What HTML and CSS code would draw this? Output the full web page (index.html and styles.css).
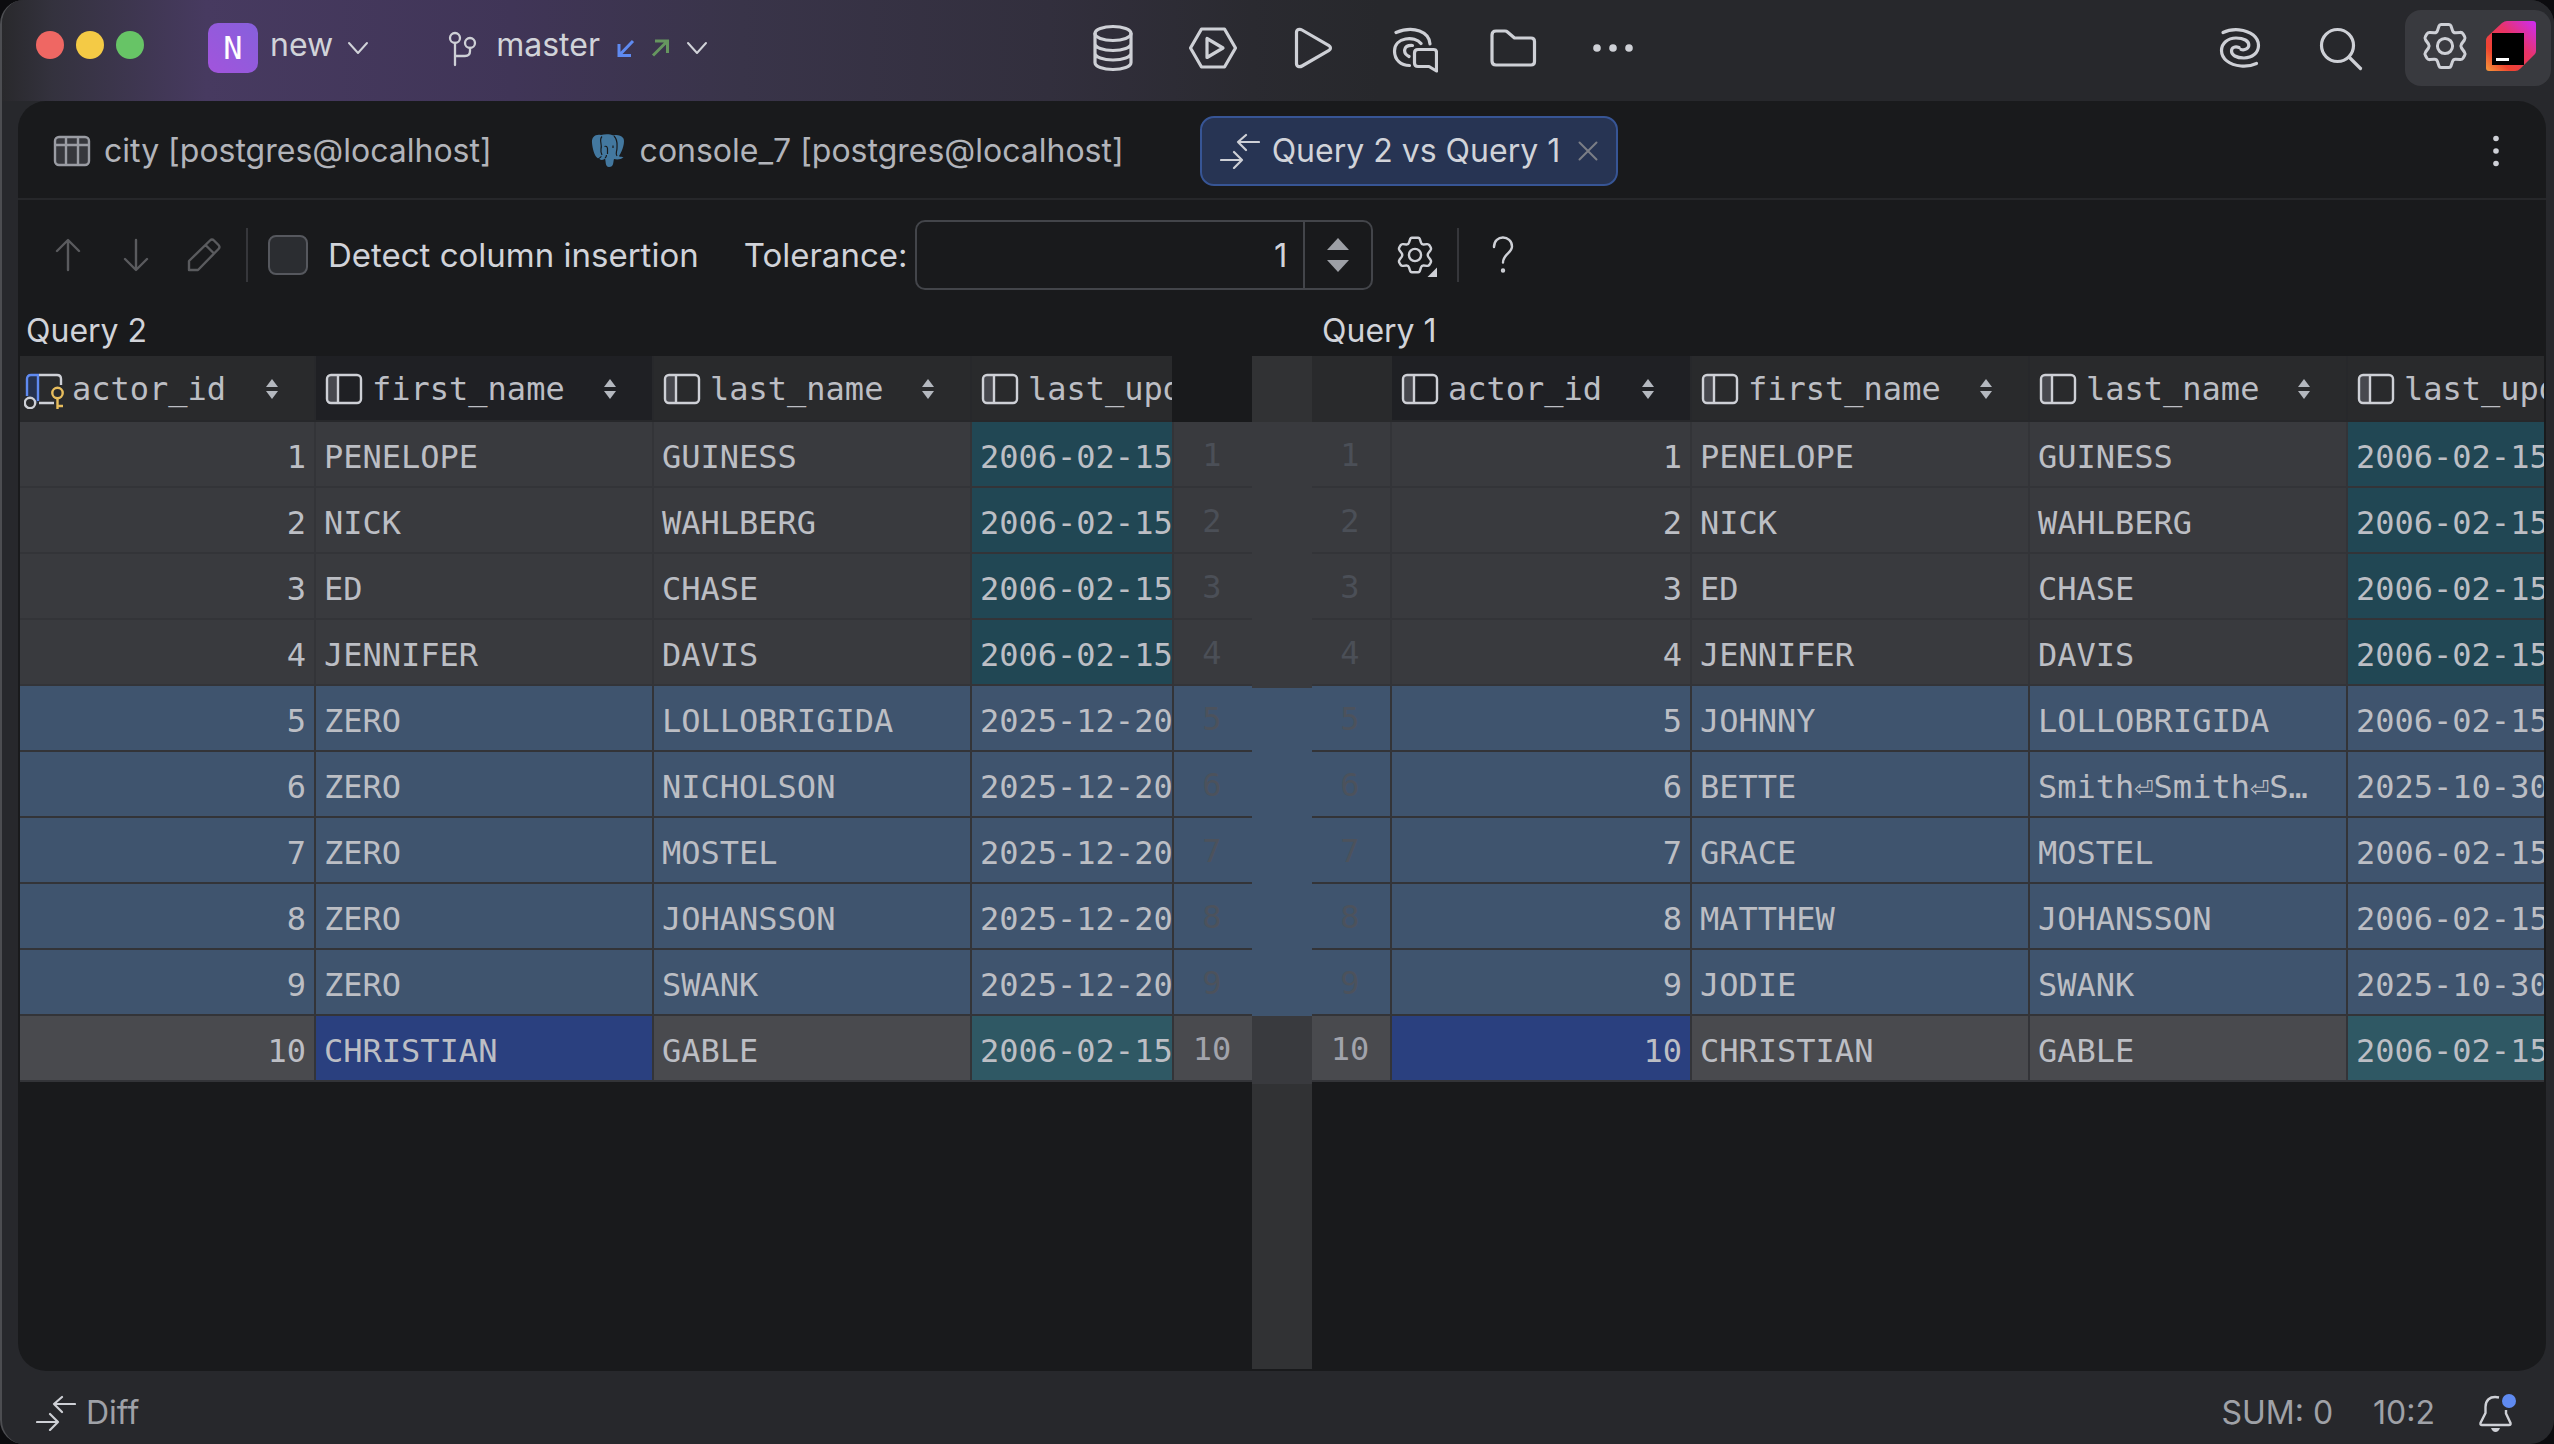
FILE: index.html
```html
<!DOCTYPE html>
<html lang="en">
<head>
  <meta charset="UTF-8" />
  <meta name="viewport" content="width=device-width, initial-scale=1.0" />
  <title>Query 2 vs Query 1</title>
  <link rel="stylesheet" href="styles.css">
</head>
<body>
  <!-- shared icons -->
  <svg class="sprite" aria-hidden="true">
    <symbol id="chevron" viewBox="0 0 22 22"><path d="M2 6L11 16L20 6" fill="none" stroke="currentColor" stroke-width="2" stroke-linecap="round" stroke-linejoin="round"/></symbol>
    <symbol id="column" viewBox="0 0 40 40">
      <path d="M4 6H14V34H4Z" fill="#47484e"/>
      <rect x="3" y="6" width="34" height="28" rx="4" fill="none" stroke="#ced0d6" stroke-width="2.4"/>
      <path d="M14 6V34" stroke="#ced0d6" stroke-width="2.4"/>
    </symbol>
    <symbol id="sort" viewBox="0 0 12 20"><path d="M6 0L12 8H0ZM6 20L0 12H12Z" fill="#b4b8bf"/></symbol>
    <symbol id="diff" viewBox="0 0 40 36"><path d="M39 9H18M26 2L18 9L26 17M1 27H22M14 19L22 27L14 35" fill="none" stroke="#ced0d6" stroke-width="2.2" stroke-linecap="round" stroke-linejoin="round"/></symbol>
    <symbol id="gear" viewBox="-25 -25 50 50">
      <path d="M-4 -21.5H4Q5.5 -21.5 6 -20L7.5 -15.5Q8.3 -13 10.8 -13.2L15 -13.6Q17 -13.8 18 -12.2L19.6 -9.5Q20.6 -7.8 19.4 -6L16.5 -2Q15.3 0 16.5 2L19.4 6Q20.6 7.8 19.6 9.5L18 12.2Q17 13.8 15 13.6L10.8 13.2Q8.3 13 7.5 15.5L6 20Q5.5 21.5 4 21.5H-4Q-5.5 21.5 -6 20L-7.5 15.5Q-8.3 13 -10.8 13.2L-15 13.6Q-17 13.8 -18 12.2L-19.6 9.5Q-20.6 7.8 -19.4 6L-16.5 2Q-15.3 0 -16.5 -2L-19.4 -6Q-20.6 -7.8 -19.6 -9.5L-18 -12.2Q-17 -13.8 -15 -13.6L-10.8 -13.2Q-8.3 -13 -7.5 -15.5L-6 -20Q-5.5 -21.5 -4 -21.5Z" fill="none" stroke="#ced0d6" stroke-width="3"/>
      <circle r="7.6" fill="none" stroke="#ced0d6" stroke-width="3"/>
    </symbol>
  </svg>

  <div class="window">
    <header class="titlebar">
      <div class="title-left">
        <div class="lights">
          <span class="light red"></span>
          <span class="light yellow"></span>
          <span class="light green"></span>
        </div>
        <button type="button" class="project">
          <span class="project-badge">N</span>
          <span class="title-text">new</span>
          <svg class="chevron"><use href="#chevron"/></svg>
        </button>
        <button type="button" class="branch">
          <svg class="icon-40" viewBox="0 0 40 40" fill="none" stroke="#ced0d6" stroke-width="2.3" stroke-linecap="round">
            <circle cx="13" cy="10" r="5"/><circle cx="28" cy="15" r="5"/>
            <path d="M13 15V37M28 20V23Q28 28 23 28H13"/>
          </svg>
          <span class="title-text">master</span>
          <svg class="arrow" viewBox="0 0 20 20"><path d="M17 3L3.500 17M3 6V17.500H15" fill="none" stroke="#5f8af0" stroke-width="3"/></svg>
          <svg class="arrow" viewBox="0 0 20 20"><path d="M3 17.500L17 3.500M5 3H17.500V15" fill="none" stroke="#66965f" stroke-width="3"/></svg>
          <svg class="chevron"><use href="#chevron"/></svg>
        </button>
      </div>

      <div class="title-actions">
        <button type="button" class="icon-btn" aria-label="Database">
          <svg viewBox="0 0 50 50"><ellipse cx="25" cy="10.500" rx="18" ry="7"/><path d="M7 10.500V39.500C7 43.500 15 46.500 25 46.500S43 43.500 43 39.500V10.500M7 20.500C7 24.500 15 27.500 25 27.500S43 24.500 43 20.500M7 30C7 34 15 37 25 37S43 34 43 30"/></svg>
        </button>
        <button type="button" class="icon-btn" aria-label="Services">
          <svg viewBox="0 0 50 50"><path d="M13.500 6H36.500L47.500 25L36.500 44H13.500L2.500 25ZM19 15.500V34.500L35 25Z"/></svg>
        </button>
        <button type="button" class="icon-btn" aria-label="Run">
          <svg viewBox="0 0 50 50"><path d="M8.500 9.500C8.500 6.500 11.500 5.500 14 7L41 22.600C43 23.800 43 26.200 41 27.400L14 43C11.500 44.500 8.500 43.500 8.500 40.500Z"/></svg>
        </button>
        <button type="button" class="icon-btn" aria-label="AI Chat">
          <svg viewBox="0 0 50 50"><path d="M8 9.500C26 2 41.500 9 42 21M33 20.500C27 12.500 6.500 14 6.500 28C6.500 37 13 42.500 21.500 42.500M24.500 22.500C15 22 14.500 30 21 33.500M30 26.500H45.500Q48.500 26.500 48.500 29.500V48L41 43.500H30Q26.500 43.500 26.500 40V30Q26.500 26.500 30 26.500Z"/></svg>
        </button>
        <button type="button" class="icon-btn" aria-label="Files">
          <svg viewBox="0 0 50 50"><path d="M4 12Q4 8 8 8H17Q18.500 8 19.500 9L26.500 15H43Q46.500 15 46.500 18.500V38.500Q46.500 42 43 42H8Q4 42 4 38Z"/></svg>
        </button>
        <button type="button" class="icon-btn" aria-label="More">
          <svg class="filled" viewBox="0 0 50 50"><circle cx="9" cy="25" r="3.800"/><circle cx="25" cy="25" r="3.800"/><circle cx="41" cy="25" r="3.800"/></svg>
        </button>
      </div>

      <div class="title-right">
        <button type="button" class="icon-btn" aria-label="AI Assistant">
          <svg viewBox="0 0 50 50"><path d="M8 9.500C14 6.500 20 6.500 24 6.800C36 8 43.500 14.500 43.500 22.500C43.500 30 37 35 29 35C21 35 16.500 32 16.500 28C16.500 24.500 20 23 24 24.500M41.500 40.500C37 42.500 31 43.500 26 43C14 42 6.500 35.500 6.500 27.500C6.500 20 13 15 21 15C29 15 33.800 18 33.800 22C33.800 25.500 30 27.500 26 26.500"/></svg>
        </button>
        <button type="button" class="icon-btn" aria-label="Search">
          <svg viewBox="0 0 50 50"><circle cx="22.500" cy="22.500" r="16"/><path d="M34 34L45.500 45.500"/></svg>
        </button>
        <div class="title-group">
          <button type="button" class="icon-btn" aria-label="Settings"><svg><use href="#gear"/></svg></button>
          <svg class="logo" viewBox="0 0 50 50">
            <defs>
              <linearGradient id="logoFill" x1="0" y1="1" x2="1" y2="0">
                <stop offset="0" stop-color="#f59a3c"/><stop offset="0.250" stop-color="#f0442f"/>
                <stop offset="0.600" stop-color="#e8336a"/><stop offset="1" stop-color="#cc2cf5"/>
              </linearGradient>
            </defs>
            <path d="M0 19Q0 17 1.500 15.500L16 2Q18.500 0 21 0H47Q50 0 50 3V30Q50 32 48.500 33.500L34.500 47.500Q32 50 29 50H3Q0 50 0 47Z" fill="url(#logoFill)"/>
            <path d="M6 12H38V44H6Z" fill="#000"/><path d="M10 37H23V40H10Z" fill="#fff"/>
          </svg>
        </div>
      </div>
    </header>

    <main class="editor">
      <nav class="tabs">
        <div class="tab">
          <svg class="icon-40" viewBox="0 0 40 40"><rect x="3" y="6" width="34" height="28" rx="4" fill="#36373c" stroke="#9a9ca3" stroke-width="2.400"/><path d="M3 14H37M14 6V34M26 6V34" stroke="#9a9ca3" stroke-width="2.400"/></svg>
          <span>city [postgres@localhost]</span>
          <span class="close"></span>
        </div>
        <div class="tab">
          <svg class="icon-40" viewBox="0 0 40 40">
            <path d="M13 4C7 3 3.500 6 4 12C4.500 18 6.500 25 9.500 27C11 28 12.500 25 13.500 25C14 27 11 27 11.500 28C13 29.500 16 29 17 27.500C18 30 17 36 21 36C26 36 25 31 26 28C29 29 33 28.500 35.500 26.500C34 25.500 31 26 31 25C35 19 37 11 35.500 7.500C33 4 28 3.500 25.500 4.500C22 3 17 3 13 4Z" fill="#43789f"/>
            <path d="M14 5.500C10.500 9 14.500 13 13 18C12.500 21 13.500 23 14 24M26 5C30 9 29 13 29 17C29 21 27 22 29 25M16.500 15.500Q19 14.500 19.500 17.500V23M25 14.500V17M17 27Q18.500 26 18.500 24" fill="none" stroke="#191a1c" stroke-width="1.200"/>
          </svg>
          <span>console_7 [postgres@localhost]</span>
          <span class="close"></span>
        </div>
        <div class="tab active">
          <svg class="diff-icon"><use href="#diff"/></svg>
          <span>Query 2 vs Query 1</span>
          <button type="button" class="close" aria-label="Close tab"><svg viewBox="0 0 20 20"><path d="M1.500 1.500L18.500 18.500M18.500 1.500L1.500 18.500" stroke="#7b7e86" stroke-width="2" stroke-linecap="round"/></svg></button>
        </div>
        <button type="button" class="kebab" aria-label="Tab options"><svg viewBox="0 0 10 32"><circle cx="5" cy="3.500" r="2.800"/><circle cx="5" cy="16" r="2.800"/><circle cx="5" cy="28.500" r="2.800"/></svg></button>
      </nav>

      <div class="toolbar">
        <button type="button" class="tool" aria-label="Previous difference" disabled><svg viewBox="0 0 40 40"><path d="M20 35V6M9 16L20 5L31 16"/></svg></button>
        <button type="button" class="tool" aria-label="Next difference" disabled><svg viewBox="0 0 40 40"><path d="M20 5V34M9 24L20 35L31 24"/></svg></button>
        <button type="button" class="tool" aria-label="Edit" disabled><svg viewBox="0 0 40 40"><path d="M5 35V26L26 5.500Q28 3.500 30 5.500L34.500 10Q36.500 12 34.500 14L14 35ZM21.500 10L30 18.500"/></svg></button>
        <span class="separator"></span>
        <input type="checkbox" id="detect" class="checkbox">
        <label for="detect" class="detect-label">Detect column insertion</label>
        <label for="tolerance">Tolerance:</label>
        <div class="spinner">
          <input type="number" id="tolerance" value="1">
          <div class="spinner-arrows">
            <button type="button" aria-label="Increase"><svg viewBox="0 0 22 12"><path d="M11 0L22 12H0Z"/></svg></button>
            <button type="button" aria-label="Decrease"><svg viewBox="0 0 22 12"><path d="M0 0H22L11 12Z"/></svg></button>
          </div>
        </div>
        <button type="button" class="tool settings" aria-label="Diff settings">
          <svg><use href="#gear"/></svg>
          <span class="corner"></span>
        </button>
        <span class="separator"></span>
        <button type="button" class="tool help" aria-label="Help"><svg viewBox="0 0 40 40"><path d="M11 12C11 -1 29 0 29 11.500C29 18 20 19 20 27.500"/><circle cx="20" cy="35.500" r="1"/></svg></button>
      </div>

      <div class="diff">
        <h2 class="side-title">Query 2</h2>
        <h2 class="side-title right">Query 1</h2>

        <section class="side">
          <div class="viewport">
            <table>
              <colgroup><col class="c-id"><col class="c-first"><col class="c-last"><col></colgroup>
              <thead>
                <tr>
                  <th class="key"><div>
                    <svg class="icon-40" viewBox="0 0 40 40" fill="none">
                      <path d="M3 30V11Q3 6 7 6H14V34H10Q9 28 3 29Z" fill="#25324f"/>
                      <path d="M3 27V10Q3 6 7 6H14V32" stroke="#5f8af0" stroke-width="2.400"/>
                      <path d="M15 6H33Q37 6 37 10V16M15 34H30" stroke="#ced0d6" stroke-width="2.400"/>
                      <circle cx="6" cy="34" r="5.200" stroke="#ced0d6" stroke-width="2.400"/>
                      <circle cx="33.500" cy="24" r="5.200" stroke="#e7bd5d" stroke-width="2.400"/>
                      <path d="M33.500 29V40M34 37H39" stroke="#e7bd5d" stroke-width="2.400"/>
                    </svg>
                    <span>actor_id</span><svg class="sort"><use href="#sort"/></svg></div></th>
                  <th class="picked"><div><svg class="icon-40"><use href="#column"/></svg><span>first_name</span><svg class="sort"><use href="#sort"/></svg></div></th>
                  <th><div><svg class="icon-40"><use href="#column"/></svg><span>last_name</span><svg class="sort"><use href="#sort"/></svg></div></th>
                  <th><div><svg class="icon-40"><use href="#column"/></svg><span>last_update</span><svg class="sort"><use href="#sort"/></svg></div></th>
                </tr>
              </thead>
              <tbody>
                <tr><td>1</td><td>PENELOPE</td><td>GUINESS</td><td>2006-02-15</td></tr>
                <tr><td>2</td><td>NICK</td><td>WAHLBERG</td><td>2006-02-15</td></tr>
                <tr><td>3</td><td>ED</td><td>CHASE</td><td>2006-02-15</td></tr>
                <tr><td>4</td><td>JENNIFER</td><td>DAVIS</td><td>2006-02-15</td></tr>
                <tr class="changed"><td>5</td><td>ZERO</td><td>LOLLOBRIGIDA</td><td>2025-12-20</td></tr>
                <tr class="changed"><td>6</td><td>ZERO</td><td>NICHOLSON</td><td>2025-12-20</td></tr>
                <tr class="changed"><td>7</td><td>ZERO</td><td>MOSTEL</td><td>2025-12-20</td></tr>
                <tr class="changed"><td>8</td><td>ZERO</td><td>JOHANSSON</td><td>2025-12-20</td></tr>
                <tr class="changed"><td>9</td><td>ZERO</td><td>SWANK</td><td>2025-12-20</td></tr>
                <tr class="current"><td>10</td><td class="selected">CHRISTIAN</td><td>GABLE</td><td>2006-02-15</td></tr>
              </tbody>
            </table>
          </div>
          <ol class="gutter">
            <li>1</li><li>2</li><li>3</li><li>4</li>
            <li class="changed">5</li><li class="changed">6</li><li class="changed">7</li><li class="changed">8</li><li class="changed">9</li>
            <li class="current">10</li>
          </ol>
        </section>

        <div class="divider">
          <div class="block head"></div>
          <div class="block same"></div>
          <div class="block changed"></div>
          <div class="block last"></div>
        </div>

        <section class="side">
          <ol class="gutter right">
            <li>1</li><li>2</li><li>3</li><li>4</li>
            <li class="changed">5</li><li class="changed">6</li><li class="changed">7</li><li class="changed">8</li><li class="changed">9</li>
            <li class="current">10</li>
          </ol>
          <div class="viewport">
            <table>
              <colgroup><col class="c-id-wide"><col class="c-first"><col class="c-last"><col></colgroup>
              <thead>
                <tr>
                  <th class="picked"><div><svg class="icon-40"><use href="#column"/></svg><span>actor_id</span><svg class="sort"><use href="#sort"/></svg></div></th>
                  <th><div><svg class="icon-40"><use href="#column"/></svg><span>first_name</span><svg class="sort"><use href="#sort"/></svg></div></th>
                  <th><div><svg class="icon-40"><use href="#column"/></svg><span>last_name</span><svg class="sort"><use href="#sort"/></svg></div></th>
                  <th><div><svg class="icon-40"><use href="#column"/></svg><span>last_update</span><svg class="sort"><use href="#sort"/></svg></div></th>
                </tr>
              </thead>
              <tbody>
                <tr><td>1</td><td>PENELOPE</td><td>GUINESS</td><td>2006-02-15</td></tr>
                <tr><td>2</td><td>NICK</td><td>WAHLBERG</td><td>2006-02-15</td></tr>
                <tr><td>3</td><td>ED</td><td>CHASE</td><td>2006-02-15</td></tr>
                <tr><td>4</td><td>JENNIFER</td><td>DAVIS</td><td>2006-02-15</td></tr>
                <tr class="changed"><td>5</td><td>JOHNNY</td><td>LOLLOBRIGIDA</td><td>2006-02-15</td></tr>
                <tr class="changed"><td>6</td><td>BETTE</td><td>Smith⏎Smith⏎S…</td><td>2025-10-30</td></tr>
                <tr class="changed"><td>7</td><td>GRACE</td><td>MOSTEL</td><td>2006-02-15</td></tr>
                <tr class="changed"><td>8</td><td>MATTHEW</td><td>JOHANSSON</td><td>2006-02-15</td></tr>
                <tr class="changed"><td>9</td><td>JODIE</td><td>SWANK</td><td>2025-10-30</td></tr>
                <tr class="current"><td class="selected">10</td><td>CHRISTIAN</td><td>GABLE</td><td>2006-02-15</td></tr>
              </tbody>
            </table>
          </div>
        </section>
      </div>
    </main>

    <footer class="statusbar">
      <svg class="diff-icon"><use href="#diff"/></svg>
      <span>Diff</span>
      <span class="sum">SUM: 0</span>
      <span class="position">10:2</span>
      <button type="button" class="bell" aria-label="Notifications">
        <svg viewBox="0 0 40 40">
          <path d="M22 4.500C12 2.500 8.500 8 8.500 14V20L3.500 30Q3 32 5 32H32Q34 32 33.500 30L29 20.500V17" fill="none" stroke="#ced0d6" stroke-width="2.400"/>
          <path d="M14 35H23Q21.500 39 18.500 39T14 35Z" fill="#ced0d6"/>
          <circle cx="32" cy="8" r="7" fill="#5f8af0"/>
        </svg>
      </button>
    </footer>
  </div>
</body>
</html>
```
FILE: styles.css
```css
* {
  box-sizing: border-box;
}

body {
  margin: 0;
  background-color: #0c0c0f;
  font-family: Inter, sans-serif;
  font-size: 32px;
  line-height: 40px;
  color: #d1d3d9;
}

button {
  padding: 0;
  border: none;
  background: none;
  color: inherit;
  font: inherit;
}

svg {
  display: block;
  flex: none;
}

.sprite {
  width: 0;
  height: 0;
  position: absolute;
}

.icon-40 {
  width: 40px;
  height: 40px;
}

.window {
  display: flex;
  flex-direction: column;
  height: 100vh;
  border-left: 2px solid #4c4d51;
  border-radius: 24px;
  background-color: #27282c;
  overflow: hidden;
}

/* title bar */
.titlebar {
  display: flex;
  align-items: center;
  height: 101px;
  padding: 0 3px 6px 34px;
  background: linear-gradient(90deg, #29292c 0%, #34323e 2%, #473a60 8%, #403557 20%, #393449 29%, #322f3d 41%, #2a2a30 49%, #27282c 54%);
}

.title-left,
.title-actions,
.title-right,
.lights,
.project,
.branch {
  display: flex;
  align-items: center;
}

.title-left {
  flex: 33 1 auto;
}

.title-right {
  flex: 50 1 auto;
  justify-content: flex-end;
}

.lights {
  gap: 12px;
  padding-bottom: 6px;
}

.light {
  width: 28px;
  height: 28px;
  border-radius: 50%;
}

.light.red { background-color: #ef6763; }
.light.yellow { background-color: #f4ca45; }
.light.green { background-color: #67c466; }

.project {
  margin-left: 64px;
  gap: 12px;
}

.project-badge {
  width: 50px;
  height: 50px;
  border-radius: 10px;
  background: linear-gradient(45deg, #a254dc, #8660dc);
  color: #fff;
  font-family: "DejaVu Sans Mono", monospace;
  line-height: 50px;
}

.title-text {
  padding: 0 2px 6px 0;
}

.chevron {
  width: 22px;
  height: 22px;
}

.branch {
  margin-left: 73px;
  gap: 14px;
}

.branch .chevron {
  margin-left: 2px;
}

.arrow {
  width: 20px;
  height: 20px;
}

.title-actions {
  gap: 50px;
}

.icon-btn svg {
  width: 50px;
  height: 50px;
  fill: none;
  stroke: #ced0d6;
  stroke-width: 3.2;
  stroke-linecap: round;
  stroke-linejoin: round;
}

.icon-btn .filled {
  fill: #ced0d6;
  stroke: none;
}

.title-right {
  gap: 50px;
}

.title-group {
  display: flex;
  align-items: center;
  gap: 16px;
  height: 76px;
  margin-left: -10px;
  padding: 0 15px 4px;
  border-radius: 16px;
  background-color: #393a3f;
}

.logo {
  width: 50px;
  height: 50px;
}

/* editor panel */
.editor {
  flex: 1;
  display: flex;
  flex-direction: column;
  min-height: 0;
  margin: 0 8px 0 16px;
  padding: 0 2px 2px;
  border-radius: 28px;
  background-color: #191a1c;
  overflow: hidden;
}

.tabs {
  display: flex;
  align-items: center;
  gap: 18px;
  height: 99px;
  margin: 0 -2px;
  padding: 2px 45px 0 14px;
  border-bottom: 2px solid #26272a;
  color: #b2b4ba;
}

.tab {
  display: flex;
  align-items: center;
  gap: 12px;
  height: 70px;
  padding: 0 12px 0 18px;
  border: 2px solid transparent;
  border-radius: 14px;
  white-space: nowrap;
}

.tab.active {
  border-color: #375595;
  background-color: #273453;
  color: #d1d3d9;
}

.close {
  width: 32px;
}

.close svg {
  width: 20px;
  height: 20px;
  margin: 0 auto;
}

.kebab {
  margin-left: auto;
}

.kebab svg {
  width: 10px;
  height: 32px;
  fill: #ced0d6;
}

.diff-icon {
  width: 40px;
  height: 36px;
}

/* toolbar */
.toolbar {
  display: flex;
  align-items: center;
  height: 108px;
  padding: 2px 0 0 28px;
  font-size: 33px;
}

.tool {
  position: relative;
  margin-right: 28px;
}

.tool svg {
  width: 40px;
  height: 40px;
  fill: none;
  stroke: #ced0d6;
  stroke-width: 2.4;
  stroke-linecap: round;
}

.tool:disabled svg {
  stroke: #5a5b5e;
  stroke-linejoin: round;
}

.separator {
  width: 2px;
  height: 54px;
  margin-left: -6px;
  background-color: #36373b;
}

.checkbox {
  appearance: none;
  width: 40px;
  height: 40px;
  margin: 0 20px;
  border: 2px solid #56585e;
  border-radius: 8px;
  background-color: #2b2d31;
}

.detect-label {
  margin-right: 45px;
}

.spinner {
  display: flex;
  width: 458px;
  height: 70px;
  margin: 0 22px 0 8px;
  border: 2px solid #43454a;
  border-radius: 10px;
}

.spinner input {
  flex: 1;
  min-width: 0;
  padding: 0 16px;
  border: none;
  border-right: 2px solid #43454a;
  outline: none;
  background: none;
  color: inherit;
  font: inherit;
  text-align: right;
  appearance: textfield;
}

.spinner input::-webkit-inner-spin-button {
  appearance: none;
}

.spinner-arrows {
  display: flex;
  flex-direction: column;
  align-items: center;
  justify-content: center;
  gap: 10px;
  width: 66px;
}

.spinner-arrows svg {
  width: 22px;
  height: 12px;
  fill: #9da0a6;
}

/* drop-down mark over the gear */
.corner {
  position: absolute;
  right: -2px;
  bottom: -2px;
  width: 10px;
  height: 10px;
  background-color: #ced0d6;
  clip-path: polygon(100% 0, 100% 100%, 0 100%);
}

.help {
  margin-left: 24px;
}

/* side by side tables */
.diff {
  flex: 1;
  display: grid;
  grid-template-columns: 1fr 60px 1fr;
  grid-template-rows: 48px 1fr;
  min-height: 0;
}

.side-title {
  margin: 0;
  padding: 3px 6px;
  font-size: 32px;
  line-height: 40px;
  font-weight: normal;
}

.side-title.right {
  grid-column: 3;
  padding-left: 10px;
}

.side {
  display: flex;
  min-width: 0;
}

.viewport {
  flex: 1;
  min-width: 0;
  overflow: hidden;
}

table {
  width: 1276px;
  table-layout: fixed;
  border-collapse: separate;
  border-spacing: 0;
}

table,
.gutter {
  font-family: "DejaVu Sans Mono", monospace;
  color: #bcbec4;
}

.c-id { width: 296px; }
.c-id-wide { width: 300px; }
.c-first { width: 338px; }
.c-last { width: 318px; }

th {
  height: 66px;
  padding: 2px 36px 0 8px;
  border-right: 2px solid #27282b;
  border-bottom: 2px solid #27282b;
  background-color: #292a2c;
  font-weight: normal;
  text-align: left;
}

th.picked {
  background-color: #1f2024;
}

th.key {
  padding-left: 4px;
}

th div {
  display: flex;
  align-items: center;
  gap: 8px;
}

.sort {
  width: 12px;
  height: 20px;
  margin-left: auto;
}

td {
  height: 66px;
  padding: 6px 8px 0;
  border-right: 2px solid #333438;
  border-bottom: 2px solid #333438;
  background-color: #393a3e;
  white-space: nowrap;
}

td:first-child {
  text-align: right;
}

td:last-child {
  background-color: #214754;
}

.changed td {
  background-color: #3f546e;
}

.current td {
  background-color: #494a4e;
}

.current td:last-child {
  background-color: #2f5864;
}

.current td.selected {
  background-color: #2a407f;
}

.gutter {
  flex: none;
  width: 80px;
  margin: 0;
  padding: 66px 0 0;
  list-style: none;
  text-align: center;
}

.gutter.right {
  background: linear-gradient(#292a2c, #292a2c) no-repeat 0 0 / 100% 66px;
}

.gutter li {
  height: 66px;
  padding-right: 2px;
  border-left: 2px solid #333438;
  border-bottom: 2px solid #333438;
  background-color: #393a3e;
  color: #4b4f57;
  line-height: 66px;
}

.gutter.right li {
  border-left: none;
  border-right: 2px solid #333438;
}

.gutter li.changed {
  background-color: #3f546e;
  color: #4c525c;
}

.gutter li.current {
  background-color: #494a4e;
  color: #a1a3ab;
}

.divider {
  display: flex;
  flex-direction: column;
  background-color: #313234;
}

.block.head { height: 66px; }
.block.same { height: 266px; background-color: #393a3e; }
.block.changed { height: 328px; background-color: #3f546e; }
.block.last { height: 68px; background-color: #393a3e; }

/* status bar */
.statusbar {
  display: flex;
  align-items: center;
  height: 73px;
  padding: 10px 37px 0 34px;
  color: #9fa1a7;
}

.statusbar .diff-icon {
  margin-right: 10px;
}

.sum {
  margin-left: auto;
}

.position {
  margin: 0 42px 0 40px;
}

.bell svg {
  width: 40px;
  height: 40px;
}
```
